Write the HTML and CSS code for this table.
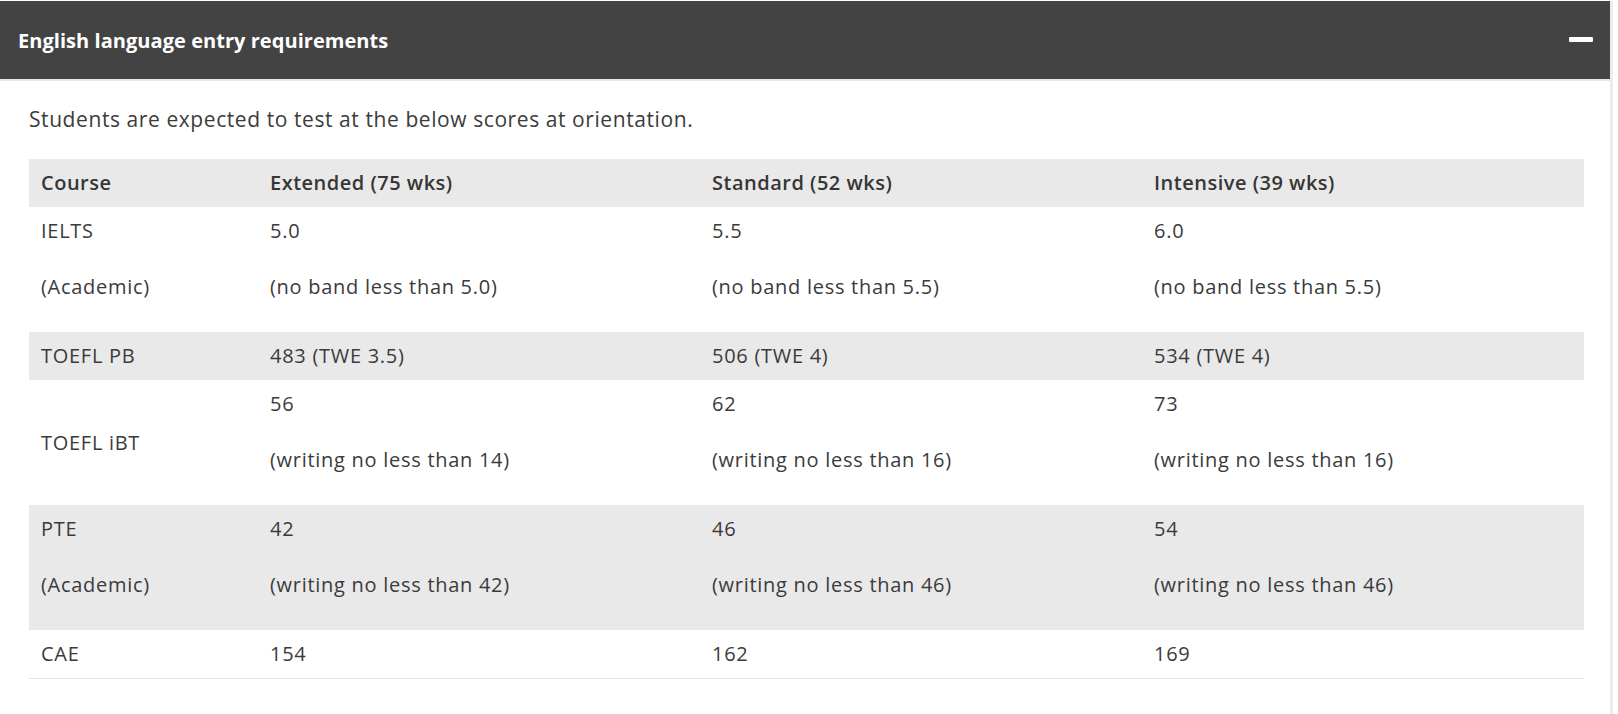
FILE: index.html
```html
<!DOCTYPE html>
<html lang="en">
<head>
<meta charset="utf-8">
<title>English language entry requirements</title>
<link rel="stylesheet" href="styles.css">
</head>
<body>
<section class="accordion">
  <header class="acc-head">
    <h2 class="acc-title">English language entry requirements</h2>
    <span class="acc-toggle" aria-hidden="true"></span>
  </header>
  <div class="acc-body">
    <p class="intro">Students are expected to test at the below scores at orientation.</p>
    <table class="req">
      <colgroup>
        <col class="c-course">
        <col class="c-val">
        <col class="c-val">
        <col class="c-val">
      </colgroup>
      <thead>
        <tr class="shade">
          <th>Course</th>
          <th>Extended (75 wks)</th>
          <th>Standard (52 wks)</th>
          <th>Intensive (39 wks)</th>
        </tr>
      </thead>
      <tbody>
        <tr>
          <td><p class="l1">IELTS</p><p class="l2">(Academic)</p></td>
          <td><p class="l1">5.0</p><p class="l2">(no band less than 5.0)</p></td>
          <td><p class="l1">5.5</p><p class="l2">(no band less than 5.5)</p></td>
          <td><p class="l1">6.0</p><p class="l2">(no band less than 5.5)</p></td>
        </tr>
        <tr class="shade">
          <td>TOEFL PB</td>
          <td>483 (TWE 3.5)</td>
          <td>506 (TWE 4)</td>
          <td>534 (TWE 4)</td>
        </tr>
        <tr>
          <td>TOEFL iBT</td>
          <td><p class="l1">56</p><p class="l2">(writing no less than 14)</p></td>
          <td><p class="l1">62</p><p class="l2">(writing no less than 16)</p></td>
          <td><p class="l1">73</p><p class="l2">(writing no less than 16)</p></td>
        </tr>
        <tr class="shade">
          <td><p class="l1">PTE</p><p class="l2">(Academic)</p></td>
          <td><p class="l1">42</p><p class="l2">(writing no less than 42)</p></td>
          <td><p class="l1">46</p><p class="l2">(writing no less than 46)</p></td>
          <td><p class="l1">54</p><p class="l2">(writing no less than 46)</p></td>
        </tr>
        <tr class="last">
          <td>CAE</td>
          <td>154</td>
          <td>162</td>
          <td>169</td>
        </tr>
      </tbody>
    </table>
  </div>
</section>
</body>
</html>
```

FILE: styles.css
```css
html, body {
  margin: 0;
  padding: 0;
  background: #ffffff;
}

body {
  font-family: "Open Sans", "Liberation Sans", Arial, sans-serif;
  color: #3b3b3b;
  padding-top: 1px;
  background: #ffffff;
}

.accordion {
  width: 1613px;
  border-right: 3px solid #ececec;
  min-height: 713px;
  box-sizing: border-box;
}

.acc-head {
  height: 78px;
  background: #434343;
  border-bottom: 2px solid #e6e6e6;
  display: flex;
  align-items: center;
  justify-content: space-between;
  padding: 0 17px 0 18px;
}

.acc-title {
  margin: 0;
  color: #ffffff;
  font-size: 20px;
  font-weight: 700;
  letter-spacing: 0.05px;
}

.acc-toggle {
  width: 24px;
  height: 5px;
  background: #ffffff;
  border-radius: 1px;
  margin-top: -1px;
}

.acc-body {
  padding: 0 26px 0 29px;
}

.intro {
  margin: 24px 0 26px;
  font-size: 21px;
  line-height: 28px;
  letter-spacing: 0.58px;
}

.req {
  width: 1555px;
  border-collapse: collapse;
  table-layout: fixed;
  font-size: 20px;
  line-height: 28px;
  letter-spacing: 0.72px;
}

.c-course { width: 229px; }
.c-val { width: 442px; }

.req th,
.req td {
  text-align: left;
  vertical-align: middle;
  padding: 10px 12px;
}

.req th {
  font-weight: 600;
  color: #363636;
  letter-spacing: 0.5px;
}

.shade {
  background: #e9e9e9;
}

.req p {
  margin: 0;
}

.req .l2 {
  margin-top: 28px;
  margin-bottom: 21px;
}

.last td {
  border-bottom: 1px solid #e4e4e4;
}
```
